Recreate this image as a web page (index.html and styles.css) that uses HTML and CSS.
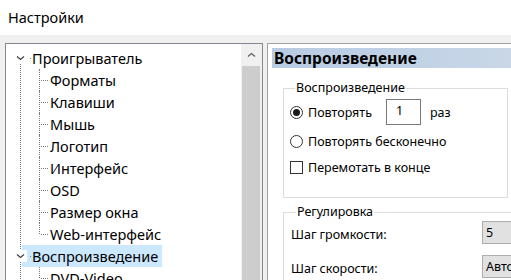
FILE: index.html
```html
<!DOCTYPE html>
<html lang="ru">
<head>
  <meta charset="UTF-8" />
  <meta name="viewport" content="width=device-width, initial-scale=1.0"/>
  <title>Настройки</title>
  <link rel="stylesheet" href="styles.css">
</head>
<body>

  <div class="titlebar">Настройки</div>

  <div class="main">
    <!-- дерево разделов -->
    <div class="tree">
      <ul class="tree-list">
        <li class="node">
          <div class="row"><span class="chev"><svg width="9" height="6" viewBox="0 0 9 6"><path d="M1 1.5 L4.5 4.5 L8 1.5" fill="none" stroke="#444" stroke-width="1.3"/></svg></span><span class="label">Проигрыватель</span></div>
          <ul class="children">
            <li><span class="label">Форматы</span></li>
            <li><span class="label">Клавиши</span></li>
            <li><span class="label">Мышь</span></li>
            <li><span class="label">Логотип</span></li>
            <li><span class="label">Интерфейс</span></li>
            <li><span class="label">OSD</span></li>
            <li><span class="label">Размер окна</span></li>
            <li><span class="label">Web-интерфейс</span></li>
          </ul>
        </li>
        <li class="node">
          <div class="row"><span class="chev"><svg width="9" height="6" viewBox="0 0 9 6"><path d="M1 1.5 L4.5 4.5 L8 1.5" fill="none" stroke="#444" stroke-width="1.3"/></svg></span><span class="label selected">Воспроизведение</span></div>
          <ul class="children">
            <li><span class="label">DVD-Video</span></li>
          </ul>
        </li>
      </ul>
      <div class="scrollbar">
        <div class="arrow"><svg width="9" height="6" viewBox="0 0 9 6"><path d="M1 4.5 L4.5 1.5 L8 4.5" fill="none" stroke="#606060" stroke-width="1.3"/></svg></div>
        <div class="thumb"></div>
      </div>
    </div>

    <!-- страница настроек -->
    <div class="panel">
      <div class="header">Воспроизведение</div>

      <fieldset class="group group-play">
        <legend>Воспроизведение</legend>
        <div class="opt opt-first">
          <span class="radio checked"></span>
          <span class="opt-text">Повторять</span>
          <input class="num" type="text" value="1">
          <span class="unit">раз</span>
        </div>
        <div class="opt">
          <span class="radio"></span>
          <span class="opt-text">Повторять бесконечно</span>
        </div>
        <div class="opt">
          <span class="check"></span>
          <span class="opt-text">Перемотать в конце</span>
        </div>
      </fieldset>

      <fieldset class="group group-adjust">
        <legend>Регулировка</legend>
        <div class="field">
          <span class="field-label">Шаг громкости:</span>
          <div class="combo">5</div>
        </div>
        <div class="field">
          <span class="field-label">Шаг скорости:</span>
          <div class="combo">Авто</div>
        </div>
      </fieldset>
    </div>
  </div>

</body>
</html>
```

FILE: styles.css
```css
body {
  margin: 0;
  background-color: #f0f0f0;
  font-family: "Noto Sans", "Open Sans", sans-serif;
  color: #000;
  width: 511px;
  height: 280px;
  overflow: hidden;
}

.titlebar {
  height: 35px;
  line-height: 34px;
  padding-left: 8px;
  background-color: #fff;
  font-size: 14.5px;
}

.main {
  display: flex;
  padding: 8px 0 0 5px;
}

/* дерево */

.tree {
  width: 258px;
  height: 237px;
  flex-shrink: 0;
  box-sizing: border-box;
  border: 1px solid #828790;
  border-bottom: none;
  background-color: #fff;
  display: flex;
}

.tree-list,
.children {
  list-style: none;
  margin: 0;
  padding: 0;
}

.tree-list {
  flex: 1;
  padding-top: 3px;
  font-size: 14.5px;
}

.node {
  position: relative;
}

.node::before {
  content: "";
  position: absolute;
  left: 14px;
  top: 11px;
  bottom: -40px;
  border-left: 1px dotted #7a7a7a;
}

.row {
  display: flex;
  align-items: center;
  height: 22px;
  position: relative;
}

.chev {
  width: 14px;
  height: 12px;
  margin-left: 7px;
  background-color: #fff;
  display: flex;
  align-items: center;
  justify-content: center;
  position: relative;
}

.row .chev + .label::before {
  content: "";
  position: absolute;
  left: 24px;
  top: 11px;
  width: 1px;
  height: 1px;
  background-color: #7a7a7a;
}

.row .label {
  padding: 0 4px 0 10px;
  line-height: 22px;
  margin-left: -5px;
}

.label.selected {
  background-color: #cce8ff;
}

.children li {
  position: relative;
  margin-left: 33px;
  padding-left: 11px;
  height: 22px;
  line-height: 22px;
}

.children li::before {
  content: "";
  position: absolute;
  left: 0;
  top: 0;
  bottom: 0;
  border-left: 1px dotted #7a7a7a;
}

.children li:last-child::before {
  bottom: 11px;
}

.children li::after {
  content: "";
  position: absolute;
  left: 2px;
  top: 11px;
  width: 7px;
  border-top: 1px dotted #7a7a7a;
}

.scrollbar {
  width: 21px;
  background-color: #f0f0f0;
  display: flex;
  flex-direction: column;
}

.scrollbar .arrow {
  height: 22px;
  display: flex;
  align-items: center;
  justify-content: center;
}

.scrollbar .thumb {
  flex: 1;
  margin: 0 2px 0 1px;
  background-color: #cdcdcd;
}

/* правая часть */

.panel {
  margin-left: 4px;
  width: 240px;
  height: 237px;
  flex-shrink: 0;
  border: 1px solid #a0a0a0;
  border-right: none;
  border-bottom: none;
  background-color: #fff;
  padding: 4px 0 0 4px;
}

.header {
  height: 20px;
  line-height: 20px;
  padding-left: 2px;
  font-size: 15.5px;
  font-weight: bold;
  background: linear-gradient(to right, #b7cbe3, #c9d7e7 240px);
}

.group {
  margin: 0 0 0 11px;
  border: 1px solid #dcdcdc;
  padding: 0 0 0 6px;
  font-size: 12.5px;
}

.group legend {
  padding: 0 1px;
  margin-left: 5px;
  height: 18px;
  line-height: 18px;
}

.group-play {
  width: 225px;
  box-sizing: border-box;
  margin-top: 11px;
  padding-bottom: 20px;
}

.opt {
  display: flex;
  align-items: center;
  height: 20px;
  margin-top: 6px;
}

.opt-first {
  height: 26px;
  margin-top: 2px;
}

.radio {
  width: 11px;
  height: 11px;
  border: 1px solid #333;
  border-radius: 50%;
  display: flex;
  align-items: center;
  justify-content: center;
}

.radio.checked::after {
  content: "";
  width: 7px;
  height: 7px;
  border-radius: 50%;
  background-color: #1a1a1a;
}

.check {
  width: 11px;
  height: 11px;
  border: 1px solid #333;
}

.opt-text {
  margin-left: 5px;
}

.num {
  margin-left: 14px;
  width: 35px;
  height: 26px;
  box-sizing: border-box;
  border: 1px solid #7a7a7a;
  padding: 0 0 4px 9px;
  font-family: inherit;
  font-size: 12.5px;
}

.unit {
  margin-left: 9px;
}

.group-adjust {
  width: 229px;
  box-sizing: border-box;
  margin-top: 5px;
  padding-left: 7px;
  height: 80px;
  border-right: none;
  border-bottom: none;
}

.field {
  display: flex;
  align-items: center;
  height: 23px;
  margin-bottom: 11px;
}

.field-label {
  width: 191px;
  padding-top: 4px;
  flex-shrink: 0;
}

.combo {
  width: 31px;
  height: 23px;
  flex-shrink: 0;
  box-sizing: border-box;
  border: 1px solid #adadad;
  border-right: none;
  background-color: #e1e1e1;
  padding-left: 3px;
  line-height: 21px;
  overflow: hidden;
  white-space: nowrap;
}
```
